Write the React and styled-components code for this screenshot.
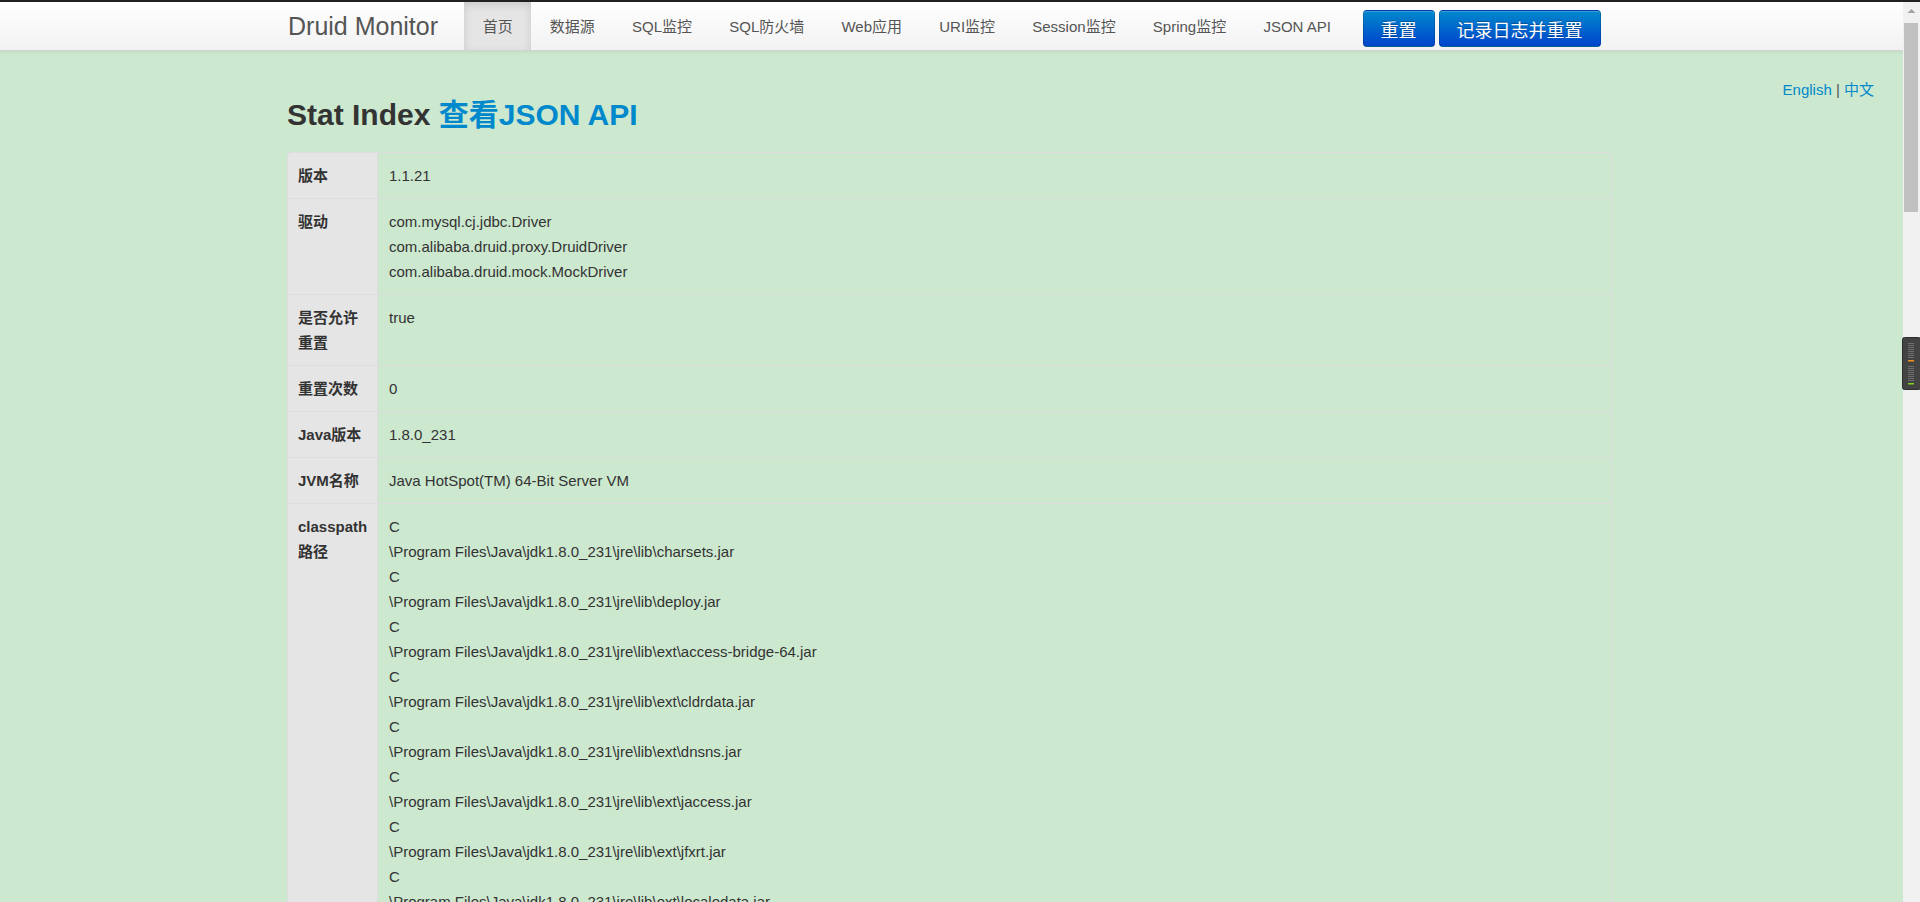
import React from 'react';
import styled, { createGlobalStyle, css } from 'styled-components';

const GlobalStyle = createGlobalStyle`
    body {
        margin: 0;
        background: #cce8cf;
        color: #333;
        font-family: "Liberation Sans", "Noto Sans CJK SC", sans-serif;
        font-size: 15px;
        line-height: 20px;
    }
    a {
        color: #0088cc;
        text-decoration: none;
    }
`;

const TopStrip = styled.div`
    height: 2px;
    background: #222;
`;

const Navbar = styled.div`
    display: flex;
    align-items: stretch;
    height: 48px;
    padding-left: 288px;
    background: linear-gradient(to bottom, #ffffff, #f2f2f2);
    border-bottom: 1px solid #d4d4d4;
    box-shadow: 0 1px 4px rgba(0, 0, 0, 0.065);
`;

const Brand = styled.a`
    font-size: 25px;
    line-height: 48px;
    color: #555 !important;
    margin-right: 26px;
    white-space: nowrap;
`;

const NavList = styled.ul`
    display: flex;
    margin: 0;
    padding: 0;
    list-style: none;
`;

const NavItem = styled.li`
    padding: 0 18.6px;
    font-size: 15px;
    line-height: 50px;
    color: #555;
    white-space: nowrap;

    ${(p) => p.$active && css`
        background: #e5e5e5;
        box-shadow: inset 0 3px 8px rgba(0, 0, 0, 0.125);
    `}
`;

const ButtonGroup = styled.div`
    display: flex;
    gap: 4px;
    margin-left: 13px;
    margin-top: 8px;
    height: 37px;
`;

const PrimaryButton = styled.button`
    font-family: "Liberation Sans", "Noto Sans CJK SC", sans-serif;
    font-size: 18px;
    color: #fff;
    padding: 0 17px;
    border: 1px solid rgba(0, 0, 0, 0.15);
    border-bottom-color: rgba(0, 0, 0, 0.3);
    border-radius: 4px;
    background: linear-gradient(to bottom, #0088cc, #0044cc);
    text-shadow: 0 -1px 0 rgba(0, 0, 0, 0.25);
    box-shadow: inset 0 1px 0 rgba(255, 255, 255, 0.2);
`;

const Main = styled.div`
    display: flow-root;
    padding-bottom: 20px;
`;

const LangSwitch = styled.div`
    float: right;
    margin: 29px 46px 0 0;
    line-height: 20px;

    span {
        color: #555;
    }
`;

const Container = styled.div`
    margin-left: 287px;
    width: 1325px;
`;

const Title = styled.h2`
    margin: 44px 0 17px;
    font-size: 30px;
    line-height: 40px;
    font-weight: bold;
    color: #333;
`;

const StatTable = styled.div`
    border: 1px solid #ddd;
    border-radius: 4px;
    overflow: hidden;
`;

const Row = styled.div`
    display: grid;
    grid-template-columns: 89px 1fr;
    line-height: 25px;

    & + & {
        border-top: 1px solid #ddd;
    }
`;

const Label = styled.div`
    background: #e5e5e5;
    padding: 10px 9px 10px 10px;
    font-weight: bold;
`;

const Value = styled.div`
    border-left: 1px solid #ddd;
    padding: 10px 10px 10px 11px;
`;

const ScrollTrack = styled.div`
    position: fixed;
    top: 2px;
    right: 0;
    bottom: 0;
    width: 17px;
    background: #f1f1f1;
    display: flex;
    flex-direction: column;
`;

const ScrollThumb = styled.div`
    margin: 4px 2px 0 1px;
    height: 189px;
    background: #c1c1c1;
`;

const Gauge = styled.svg`
    position: fixed;
    top: 337px;
    right: 0;
`;

const jre = [
    'charsets.jar', 'deploy.jar', 'ext\\access-bridge-64.jar', 'ext\\cldrdata.jar',
    'ext\\dnsns.jar', 'ext\\jaccess.jar', 'ext\\jfxrt.jar', 'ext\\localedata.jar',
    'ext\\nashorn.jar', 'ext\\sunec.jar', 'ext\\sunjce_provider.jar', 'ext\\sunmscapi.jar',
    'ext\\sunpkcs11.jar', 'ext\\zipfs.jar', 'javaws.jar', 'jce.jar', 'jfr.jar',
    'jfxswt.jar', 'jsse.jar', 'management-agent.jar', 'plugin.jar', 'resources.jar', 'rt.jar'
];

const maven = [
    'org\\springframework\\boot|spring-boot-starter-web|2.2.1.RELEASE',
    'org\\springframework\\boot|spring-boot-starter|2.2.1.RELEASE',
    'org\\springframework\\boot|spring-boot|2.2.1.RELEASE',
    'org\\springframework\\boot|spring-boot-autoconfigure|2.2.1.RELEASE',
    'org\\springframework\\boot|spring-boot-starter-logging|2.2.1.RELEASE',
    'ch\\qos\\logback|logback-classic|1.2.3',
    'ch\\qos\\logback|logback-core|1.2.3',
    'org\\apache\\logging\\log4j|log4j-to-slf4j|2.12.1',
    'org\\apache\\logging\\log4j|log4j-api|2.12.1',
    'org\\slf4j|jul-to-slf4j|1.7.29',
    'jakarta\\annotation|jakarta.annotation-api|1.3.5',
    'org\\yaml|snakeyaml|1.25',
    'org\\springframework\\boot|spring-boot-starter-json|2.2.1.RELEASE',
    'com\\fasterxml\\jackson\\core|jackson-databind|2.10.0',
    'com\\fasterxml\\jackson\\core|jackson-annotations|2.10.0',
    'com\\fasterxml\\jackson\\core|jackson-core|2.10.0',
    'com\\fasterxml\\jackson\\datatype|jackson-datatype-jdk8|2.10.0',
    'com\\fasterxml\\jackson\\datatype|jackson-datatype-jsr310|2.10.0',
    'com\\fasterxml\\jackson\\module|jackson-module-parameter-names|2.10.0',
    'org\\springframework\\boot|spring-boot-starter-tomcat|2.2.1.RELEASE',
    'org\\apache\\tomcat\\embed|tomcat-embed-core|9.0.27',
    'org\\apache\\tomcat\\embed|tomcat-embed-el|9.0.27',
    'org\\apache\\tomcat\\embed|tomcat-embed-websocket|9.0.27',
    'org\\springframework\\boot|spring-boot-starter-validation|2.2.1.RELEASE',
    'jakarta\\validation|jakarta.validation-api|2.0.1',
    'org\\hibernate\\validator|hibernate-validator|6.0.18.Final',
    'org\\jboss\\logging|jboss-logging|3.4.1.Final',
    'com\\fasterxml|classmate|1.5.1',
    'org\\springframework|spring-web|5.2.1.RELEASE',
    'org\\springframework|spring-beans|5.2.1.RELEASE',
    'org\\springframework|spring-webmvc|5.2.1.RELEASE',
    'org\\springframework|spring-aop|5.2.1.RELEASE',
    'org\\springframework|spring-context|5.2.1.RELEASE',
    'org\\springframework|spring-expression|5.2.1.RELEASE',
    'com\\alibaba|druid-spring-boot-starter|1.1.21',
    'com\\alibaba|druid|1.1.21',
    'org\\slf4j|slf4j-api|1.7.29',
    'mysql|mysql-connector-java|8.0.18',
    'org\\mybatis\\spring\\boot|mybatis-spring-boot-starter|2.1.1',
    'org\\springframework\\boot|spring-boot-starter-jdbc|2.2.1.RELEASE',
    'com\\zaxxer|HikariCP|3.4.1',
    'org\\springframework|spring-jdbc|5.2.1.RELEASE',
    'org\\springframework|spring-tx|5.2.1.RELEASE',
    'org\\mybatis\\spring\\boot|mybatis-spring-boot-autoconfigure|2.1.1',
    'org\\mybatis|mybatis|3.5.3',
    'org\\mybatis|mybatis-spring|2.0.3',
    'org\\springframework|spring-core|5.2.1.RELEASE',
    'org\\springframework|spring-jcl|5.2.1.RELEASE'
];

const classpath = [
    ...jre.map((j) => ['C', '\\Program Files\\Java\\jdk1.8.0_231\\jre\\lib\\' + j]),
    ['E', '\\IdeaProjects\\druid-demo\\target\\classes'],
    ...maven.map((m) => {
        const [group, artifact, version] = m.split('|');
        return ['C', `\\Users\\Administrator\\.m2\\repository\\${group}\\${artifact}\\${version}\\${artifact}-${version}.jar`];
    }),
    ['C', '\\Program Files\\JetBrains\\IntelliJ IDEA 2019.2.3\\lib\\idea_rt.jar']
];

const navs = ['首页', '数据源', 'SQL监控', 'SQL防火墙', 'Web应用', 'URI监控', 'Session监控', 'Spring监控', 'JSON API'];

const Lines = ({ items }) => items.map((t, i) => <div key={i}>{t}</div>);

const App = () => {
    return (
        <>
            <GlobalStyle />
            <TopStrip />
            <Navbar>
                <Brand href="#">Druid Monitor</Brand>
                <NavList>
                    {navs.map((n, i) => (
                        <NavItem key={n} $active={i === 0}>{n}</NavItem>
                    ))}
                </NavList>
                <ButtonGroup>
                    <PrimaryButton>重置</PrimaryButton>
                    <PrimaryButton>记录日志并重置</PrimaryButton>
                </ButtonGroup>
            </Navbar>
            <Main>
                <LangSwitch>
                    <a href="#">English</a> <span>|</span> <a href="#">中文</a>
                </LangSwitch>
                <Container>
                    <Title>Stat Index <a href="#">查看JSON API</a></Title>
                    <StatTable>
                        <Row>
                            <Label>版本</Label>
                            <Value>1.1.21</Value>
                        </Row>
                        <Row>
                            <Label>驱动</Label>
                            <Value>
                                <Lines items={[
                                    'com.mysql.cj.jdbc.Driver',
                                    'com.alibaba.druid.proxy.DruidDriver',
                                    'com.alibaba.druid.mock.MockDriver'
                                ]} />
                            </Value>
                        </Row>
                        <Row>
                            <Label>是否允许重置</Label>
                            <Value>true</Value>
                        </Row>
                        <Row>
                            <Label>重置次数</Label>
                            <Value>0</Value>
                        </Row>
                        <Row>
                            <Label>Java版本</Label>
                            <Value>1.8.0_231</Value>
                        </Row>
                        <Row>
                            <Label>JVM名称</Label>
                            <Value>Java HotSpot(TM) 64-Bit Server VM</Value>
                        </Row>
                        <Row>
                            <Label>classpath路径</Label>
                            <Value>
                                <Lines items={classpath.flat()} />
                            </Value>
                        </Row>
                        <Row>
                            <Label>启动时间</Label>
                            <Value>2019-12-20 15:32:11</Value>
                        </Row>
                    </StatTable>
                </Container>
            </Main>
            <ScrollTrack>
                <svg width="17" height="17" viewBox="0 0 17 17">
                    <path d="M4.5 11 L8.5 7 L12.5 11 Z" fill="#a3a3a3" />
                </svg>
                <ScrollThumb />
            </ScrollTrack>
            <Gauge width="18" height="53" viewBox="0 0 18 53">
                <rect x="0.5" y="0.5" width="18" height="52" rx="2" fill="#434343" stroke="#2e2e2e" />
                {[6, 8, 10, 12, 14, 16, 18, 20].map((y) => (
                    <rect key={'a' + y} x="6" y={y} width="6" height="1" fill="#6e6e6e" />
                ))}
                <rect x="6" y="23" width="6" height="1.5" fill="#f0901c" />
                {[29, 31, 33, 35, 37, 39, 41, 43].map((y) => (
                    <rect key={'b' + y} x="6" y={y} width="6" height="1" fill="#6e6e6e" />
                ))}
                <rect x="6" y="46" width="6" height="1.5" fill="#7ed321" />
            </Gauge>
        </>
    );
};

export default App;
